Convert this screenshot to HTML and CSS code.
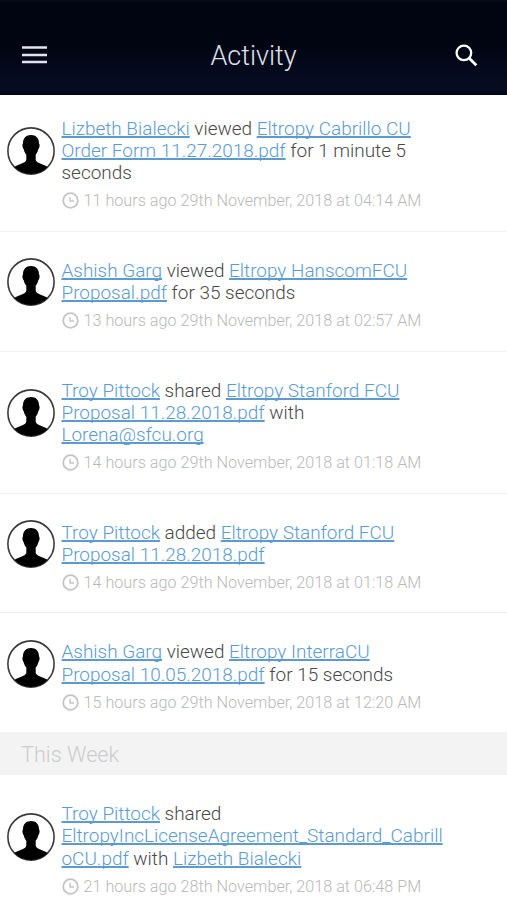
FILE: index.html
```
<!DOCTYPE html>
<html lang="en">
<head>
<meta charset="utf-8">
<title>Activity</title>
<link rel="stylesheet" href="styles.css">
</head>
<body>
<svg class="defs" width="0" height="0" aria-hidden="true">
  <symbol id="person" viewBox="0 0 48 48">
    <circle cx="24" cy="24" r="23.1" fill="#fff" stroke="#3b3b3b" stroke-width="1.600"/>
    <path d="M24 8C19 8 16 11 16 16.500C15 17 15.300 20.500 16.800 22.500C17.300 25 18.300 26.500 19.300 27.500V33C18 36.500 11 37 7.400 40A23.100 23.100 0 0 0 40.600 40C37 37 30 36.500 28.700 33V27.500C29.700 26.500 30.700 25 31.200 22.500C32.700 20.500 33 17 32 16.500C32 11 29 8 24 8Z" fill="#000"/>
  </symbol>
  <symbol id="clock" viewBox="0 0 17 17">
    <circle cx="8.500" cy="8.500" r="7.300" fill="none" stroke="#c5c5c5" stroke-width="1.800"/>
    <path d="M8 5V9H12" fill="none" stroke="#c5c5c5" stroke-width="1.400"/>
  </symbol>
</svg>
<header class="bar">
  <svg class="menu" viewBox="0 0 25 18"><path d="M0 1.500H25M0 9H25M0 16H25" stroke="#e2e3ee" stroke-width="2.500"/></svg>
  <h1>Activity</h1>
  <svg class="search" viewBox="0 0 23 23"><circle cx="8.900" cy="8.900" r="7.300" fill="none" stroke="#fff" stroke-width="2.300"/><path d="M14 14L21.300 21.300" stroke="#fff" stroke-width="2.800"/></svg>
</header>
<main>
  <article class="item first">
    <svg class="avatar"><use href="#person"/></svg>
    <p class="message"><a>Lizbeth Bialecki</a> viewed <a>Eltropy Cabrillo CU<br>Order Form 11.27.2018.pdf</a> for 1 minute 5<br>seconds</p>
    <div class="time"><svg><use href="#clock"/></svg><span>11 hours ago 29th November, 2018 at 04:14 AM</span></div>
  </article>
  <article class="item">
    <svg class="avatar"><use href="#person"/></svg>
    <p class="message"><a>Ashish Garg</a> viewed <a>Eltropy HanscomFCU<br>Proposal.pdf</a> for 35 seconds</p>
    <div class="time"><svg><use href="#clock"/></svg><span>13 hours ago 29th November, 2018 at 02:57 AM</span></div>
  </article>
  <article class="item">
    <svg class="avatar"><use href="#person"/></svg>
    <p class="message"><a>Troy Pittock</a> shared <a>Eltropy Stanford FCU<br>Proposal 11.28.2018.pdf</a> with<br><a>Lorena@sfcu.org</a></p>
    <div class="time"><svg><use href="#clock"/></svg><span>14 hours ago 29th November, 2018 at 01:18 AM</span></div>
  </article>
  <article class="item">
    <svg class="avatar"><use href="#person"/></svg>
    <p class="message"><a>Troy Pittock</a> added <a>Eltropy Stanford FCU<br>Proposal 11.28.2018.pdf</a></p>
    <div class="time"><svg><use href="#clock"/></svg><span>14 hours ago 29th November, 2018 at 01:18 AM</span></div>
  </article>
  <article class="item last">
    <svg class="avatar"><use href="#person"/></svg>
    <p class="message"><a>Ashish Garg</a> viewed <a>Eltropy InterraCU<br>Proposal 10.05.2018.pdf</a> for 15 seconds</p>
    <div class="time"><svg><use href="#clock"/></svg><span>15 hours ago 29th November, 2018 at 12:20 AM</span></div>
  </article>
  <h2>This Week</h2>
  <article class="item">
    <svg class="avatar"><use href="#person"/></svg>
    <p class="message"><a>Troy Pittock</a> shared<br><a>EltropyIncLicenseAgreement_Standard_Cabrill<br>oCU.pdf</a> with <a>Lizbeth Bialecki</a></p>
    <div class="time"><svg><use href="#clock"/></svg><span>21 hours ago 28th November, 2018 at 06:48 PM</span></div>
  </article>
</main>
</body>
</html>
```
FILE: styles.css
```
* { box-sizing: border-box; }
body {
  margin: 0;
  height: 900px;
  overflow: hidden;
  background: #fff;
  font-family: Roboto, "Liberation Sans", sans-serif;
  font-weight: 300;
}
h1, h2, p { margin: 0; font-weight: 300; }
.defs { display: none; }
.bar {
  height: 94.5px;
  padding: 16px 29px 0 22px;
  display: grid;
  grid-template-columns: 25px 1fr 23px;
  align-items: center;
  background: linear-gradient(#070d1c 0, #010511 3px, #010512 45%, #050b20 85%, #060b20 97%, #000311 100%);
}
.menu { width: 25px; height: 18px; }
.search { width: 23px; height: 23px; }
h1 {
  padding: 1px 0 0 5px;
  text-align: center;
  font-size: 27px;
  line-height: 32px;
  color: #dfe0ec;
}
.item {
  display: grid;
  grid-template-columns: 48px 1fr;
  column-gap: 6.5px;
  padding: 28px 0 21.2px 7px;
  border-bottom: 1px solid #f1f1f1;
}
.item.first { padding-top: 23.2px; }
.item.last { border-bottom: 0; }
.avatar {
  width: 48px;
  height: 48px;
  margin: -2px 0;
  align-self: center;
}
.message {
  font-size: 18.95px;
  line-height: 22.3px;
  white-space: nowrap;
  color: #484848;
}
.message a {
  color: #5b9bd1;
  text-decoration: underline;
  text-decoration-thickness: 1.5px;
  text-underline-offset: 0.5px;
  text-decoration-skip-ink: none;
}
.time {
  grid-column: 2;
  display: flex;
  align-items: center;
  gap: 5px;
  height: 18px;
  margin-top: 7px;
  font-size: 16.2px;
  white-space: nowrap;
  color: #b9b9b9;
}
.time svg { width: 17px; height: 17px; }
h2 {
  height: 43px;
  padding-left: 21px;
  background: #f3f3f3;
  font-size: 21.7px;
  line-height: 46px;
  color: #ccc;
}
```
